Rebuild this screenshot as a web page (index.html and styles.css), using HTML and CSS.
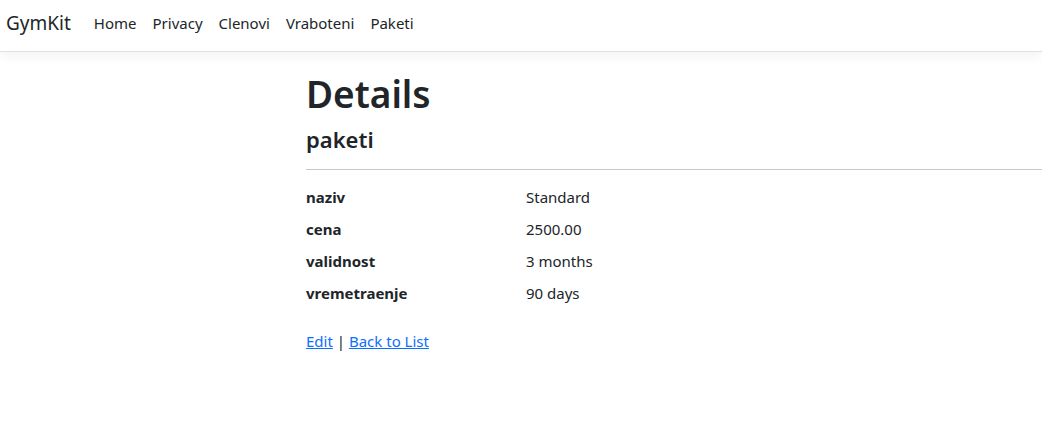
FILE: index.html
```html
<!DOCTYPE html>
<html lang="en">
<head>
<meta charset="utf-8">
<title>Details - GymKit</title>
<link rel="stylesheet" href="styles.css">
</head>
<body>
<header class="navbar">
  <a class="brand" href="#">GymKit</a>
  <nav class="nav">
    <a class="nav-link" href="#">Home</a>
    <a class="nav-link" href="#">Privacy</a>
    <a class="nav-link" href="#">Clenovi</a>
    <a class="nav-link" href="#">Vraboteni</a>
    <a class="nav-link" href="#">Paketi</a>
  </nav>
</header>
<main class="main">
  <h1 class="title">Details</h1>
  <div>
    <h4 class="subtitle">paketi</h4>
    <hr class="rule">
    <dl class="details">
      <dt>naziv</dt><dd>Standard</dd>
      <dt>cena</dt><dd>2500.00</dd>
      <dt>validnost</dt><dd>3 months</dd>
      <dt>vremetraenje</dt><dd>90 days</dd>
    </dl>
  </div>
  <div class="actions">
    <a href="#">Edit</a> | <a href="#">Back to List</a>
  </div>
</main>
</body>
</html>
```

FILE: styles.css
```css
* { box-sizing: border-box; }
html, body {
  margin: 0;
  padding: 0;
  overflow: hidden;
}
body {
  font-family: "Noto Sans", "Open Sans", sans-serif;
  font-size: 15px;
  line-height: 24px;
  color: #212529;
  background: #fff;
}
.navbar {
  display: flex;
  align-items: center;
  height: 52px;
  padding: 0 6px 5px;
  background: #fff;
  border-bottom: 1px solid #dee2e6;
  box-shadow: 0 4px 12px rgba(0, 0, 0, 0.05);
}
.brand {
  font-size: 19px;
  color: #212529;
  text-decoration: none;
  margin-right: 15px;
}
.nav {
  display: flex;
}
.nav-link {
  color: #212529;
  text-decoration: none;
  padding: 0 8px;
}
.main {
  padding: 20px 0 0 306px;
}
.title {
  font-size: 37px;
  font-weight: 600;
  line-height: 1.2;
  margin: 0 0 10px;
}
.subtitle {
  font-size: 22px;
  font-weight: 600;
  line-height: 1.2;
  margin: 0 0 11px;
}
.rule {
  margin: 16px 0 15px;
  border: 0;
  border-top: 1px solid #c8c9ca;
}
.details {
  display: grid;
  grid-template-columns: 220px 1fr;
  margin: 0 0 16px;
}
.details dt {
  font-weight: 700;
  margin: 0 0 8px;
}
.details dd {
  margin: 0 0 8px;
}
.actions a {
  color: #0d6efd;
}
```
